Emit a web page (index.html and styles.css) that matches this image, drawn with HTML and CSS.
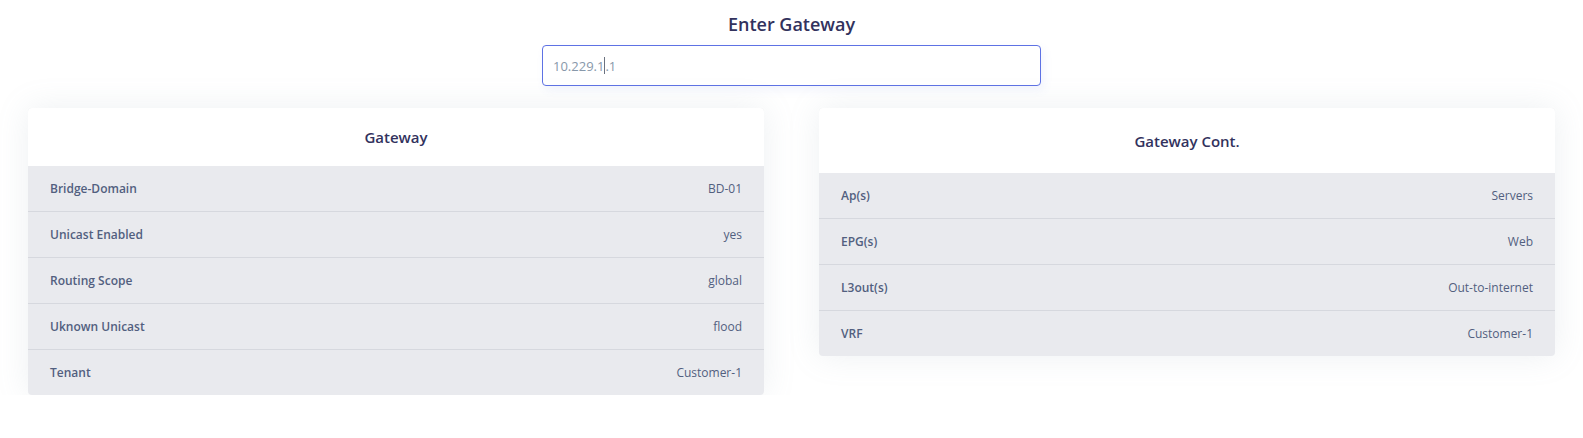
FILE: index.html
```html
<!DOCTYPE html>
<html lang="en">
<head>
<meta charset="utf-8">
<title>Enter Gateway</title>
<link rel="stylesheet" href="styles.css">
</head>
<body>
<main class="page">
  <section class="search">
    <h1 class="search-title">Enter Gateway</h1>
    <div class="search-input" role="textbox" aria-label="Gateway">10.229.1<span class="caret"></span>.1</div>
  </section>
  <section class="cards">
    <div class="card">
      <div class="card-header">Gateway</div>
      <div class="row"><span class="label">Bridge-Domain</span><span class="value">BD-01</span></div>
      <div class="row"><span class="label">Unicast Enabled</span><span class="value">yes</span></div>
      <div class="row"><span class="label">Routing Scope</span><span class="value">global</span></div>
      <div class="row"><span class="label">Uknown Unicast</span><span class="value">flood</span></div>
      <div class="row"><span class="label">Tenant</span><span class="value">Customer-1</span></div>
    </div>
    <div class="card">
      <div class="card-header card-header-tall">Gateway Cont.</div>
      <div class="row"><span class="label">Ap(s)</span><span class="value">Servers</span></div>
      <div class="row"><span class="label">EPG(s)</span><span class="value">Web</span></div>
      <div class="row"><span class="label">L3out(s)</span><span class="value">Out-to-internet</span></div>
      <div class="row"><span class="label">VRF</span><span class="value">Customer-1</span></div>
    </div>
  </section>
</main>
</body>
</html>
```
FILE: styles.css
```css
* { box-sizing: border-box; }
html, body { margin: 0; padding: 0; background: #ffffff; }
body {
  font-family: "Open Sans", "Liberation Sans", sans-serif;
  color: #525f7f;
}
.page { padding: 10px 28px 0; }
.search {
  display: flex;
  flex-direction: column;
  align-items: center;
}
.search-title {
  margin: 0;
  font-size: 18px;
  line-height: 28px;
  font-weight: 600;
  color: #32325d;
}
.search-input {
  margin-top: 7px;
  width: 499px;
  height: 41px;
  border: 1px solid #5e72e4;
  border-radius: 4px;
  background: #fff;
  box-shadow: 3px 4px 10px rgba(94, 114, 228, 0.08);
  padding: 0 10px;
  display: flex;
  align-items: center;
  font-size: 13px;
  color: #8898aa;
}
.caret {
  display: inline-block;
  width: 1px;
  height: 17px;
  background: #6b7280;
}
.cards {
  margin-top: 22px;
  display: flex;
  gap: 55px;
  align-items: flex-start;
}
.card {
  flex: 1;
  background: #e9eaee;
  border-radius: 4px;
  overflow: hidden;
  box-shadow: 0 0 32px rgba(136, 152, 170, 0.15);
}
.card-header {
  height: 58px;
  background: #fff;
  display: flex;
  align-items: center;
  justify-content: center;
  font-size: 15px;
  font-weight: 600;
  color: #32325d;
}
.card-header-tall { height: 65px; }
.row {
  height: 46px;
  display: flex;
  align-items: center;
  justify-content: space-between;
  padding: 0 22px;
  border-bottom: 1px solid #d6d8de;
  font-size: 12px;
}
.row:last-child { border-bottom: 0; height: 45px; }
.label { font-weight: 600; }
.value { font-weight: 400; }
```
